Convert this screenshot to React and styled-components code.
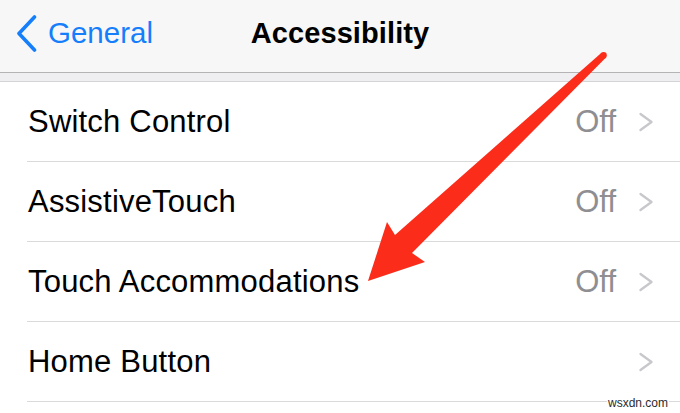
import React from "react";
import styled, { createGlobalStyle } from "styled-components";

const GlobalStyle = createGlobalStyle`
  html, body {
    margin: 0;
    padding: 0;
    background: #fff;
  }
  body {
    font-family: "Liberation Sans", Arial, Helvetica, sans-serif;
    overflow: hidden;
  }
`;

const rows = [
  { label: "Switch Control", value: "Off" },
  { label: "AssistiveTouch", value: "Off" },
  { label: "Touch Accommodations", value: "Off" },
  { label: "Home Button" },
];

const BackChevron = () => (
  <svg width="21" height="37" viewBox="0 0 21 37">
    <path
      d="M18.5 2 L3 18.5 L18.5 35"
      fill="none"
      stroke="#157efb"
      strokeWidth="3.6"
      strokeLinecap="round"
      strokeLinejoin="round"
    />
  </svg>
);

const Disclosure = () => (
  <svg width="16" height="20" viewBox="0 0 16 20">
    <path
      d="M2.5 2 L13.5 10 L2.5 18"
      fill="none"
      stroke="#c7c7cc"
      strokeWidth="2.3"
      strokeLinecap="round"
      strokeLinejoin="round"
    />
  </svg>
);

const Arrow = () => (
  <ArrowLayer width="680" height="413" viewBox="0 0 680 413">
    <polygon
      points="368,281 387,222 395,235 601.2,53 606,57.6 412,253 425,262"
      fill="#fb2d1a"
    />
    <circle cx="603.6" cy="55.3" r="3.2" fill="#fb2d1a" />
  </ArrowLayer>
);

const App = () => {
  return (
    <Screen>
      <GlobalStyle />
      <NavBar>
        <BackButton>
          <BackChevron />
          <span>General</span>
        </BackButton>
        <Title>Accessibility</Title>
        <span />
      </NavBar>
      <GroupGap />
      <List>
        {rows.map((row) => (
          <Row key={row.label}>
            <Label>{row.label}</Label>
            <Accessory>
              {row.value && <Value>{row.value}</Value>}
              <Disclosure />
            </Accessory>
          </Row>
        ))}
      </List>
      <Arrow />
      <Watermark>wsxdn.com</Watermark>
    </Screen>
  );
};

export default App;

const Screen = styled.div`
  position: relative;
  width: 680px;
  height: 413px;
  overflow: hidden;
  background: #fff;
`;

const NavBar = styled.header`
  display: grid;
  grid-template-columns: 1fr auto 1fr;
  align-items: center;
  height: 66px;
  padding: 0 16px 6px 16px;
  background: #f7f7f7;
  border-bottom: 1px solid #b4b4b4;
`;

const BackButton = styled.div`
  display: flex;
  align-items: center;
  gap: 11px;
  color: #157efb;
  font-size: 29.5px;
`;

const Title = styled.h1`
  margin: 0;
  font-size: 29px;
  font-weight: 700;
  color: #000;
  letter-spacing: 0.1px;
`;

const GroupGap = styled.div`
  height: 8px;
  background: #efeff2;
  border-bottom: 1px solid #d4d4d6;
`;

const List = styled.div`
  display: flex;
  flex-direction: column;
`;

const Row = styled.div`
  display: flex;
  align-items: center;
  justify-content: space-between;
  height: 79px;
  margin-left: 27px;
  padding: 0 26px 0 1px;
  border-bottom: 1px solid #dadada;
`;

const Label = styled.span`
  font-size: 31px;
  letter-spacing: 0.2px;
  color: #000;
`;

const Accessory = styled.div`
  display: flex;
  align-items: center;
  gap: 22px;
`;

const Value = styled.span`
  font-size: 31px;
  color: #8e8e93;
`;

const ArrowLayer = styled.svg`
  position: absolute;
  top: 0;
  left: 0;
  pointer-events: none;
`;

const Watermark = styled.div`
  position: absolute;
  right: 11px;
  bottom: 4px;
  padding: 0 1px;
  background: #fff;
  color: #2b2b2b;
  font-size: 12px;
  line-height: 12px;
`;
